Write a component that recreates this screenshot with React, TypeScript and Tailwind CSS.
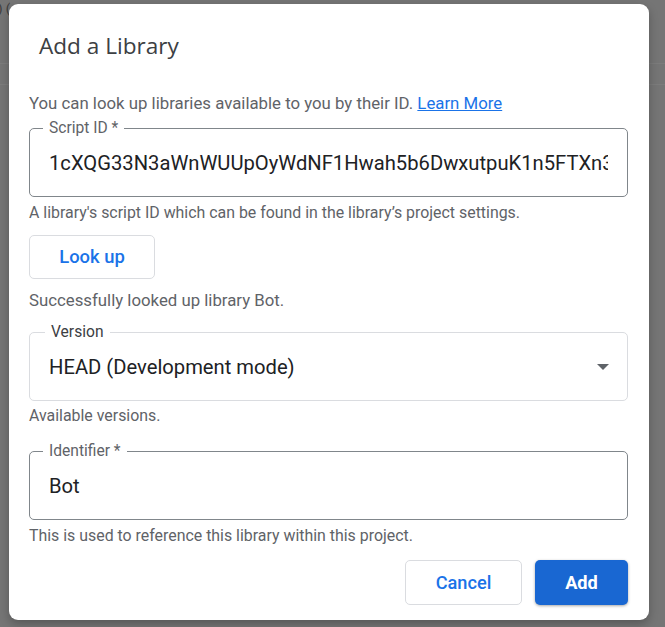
import React from 'react';

const font = { fontFamily: 'Roboto, "Noto Sans", Arial, sans-serif' };

interface FieldProps {
  label: string;
  value: string;
  muted?: boolean;
  select?: boolean;
}

const OutlinedField: React.FC<FieldProps> = ({ label, value, muted, select }) => (
  <div
    className={`relative h-[69px] rounded-[5px] border ${
      muted ? 'border-[#dadce0]' : 'border-[#80868b]'
    }`}
  >
    <span
      className={`absolute -top-[11px] bg-white px-[6px] text-[15.6px] leading-[20px] ${
        muted ? 'left-[15px] text-[#3c4043]' : 'left-[13px] text-[#5f6368]'
      }`}
    >
      {label}
    </span>
    <div className="flex h-full items-center pl-[19px] pr-[19px]">
      <span className="flex-1 overflow-hidden whitespace-nowrap text-[20.2px] leading-[26px] text-[#202124]">
        {value}
      </span>
      {select && (
        <svg width="12" height="6" viewBox="0 0 12 6" className="ml-3 mr-[-1px]">
          <path d="M0 0h12L6 6z" fill="#5f6368" />
        </svg>
      )}
    </div>
  </div>
);

const Helper: React.FC<{ children: React.ReactNode; className?: string }> = ({ children, className }) => (
  <p className={`leading-[20px] text-[#5f6368] ${className ?? ''}`}>{children}</p>
);

export default function App() {
  return (
    <div className="relative h-[627px] w-[665px] overflow-hidden bg-[#757575]" style={font}>
      {/* page underneath the scrim */}
      <div className="h-[64px] border-b border-[#7c7c7c] text-[13px] leading-[18px] text-[#3a3a3a]">
        <span className="-ml-[2px]">) (</span>
      </div>
      <div className="h-[21px] border-b border-[#7c7c7c]" />

      <div className="absolute left-[9px] top-[4px] flex h-[616px] w-[640px] flex-col rounded-[9px] bg-white pl-[20px] pr-[21px] shadow-[0_4px_10px_rgba(0,0,0,0.25)]">
        <h1
          className="ml-[10px] mt-[28px] text-[22.6px] leading-[28px] text-[#3c4043]"
          style={{ fontFamily: '"Open Sans", Roboto, sans-serif' }}
        >
          Add a Library
        </h1>

        <Helper className="mt-[33px] text-[16.8px]">
          You can look up libraries available to you by their ID.{' '}
          <a className="text-[#1a73e8] underline">Learn More</a>
        </Helper>

        <div className="mt-[15px]">
          <OutlinedField label="Script ID *" value="1cXQG33N3aWnWUUpOyWdNF1Hwah5b6DwxutpuK1n5FTXn3Qm8rLz" />
        </div>
        <Helper className="mt-[6px] text-[15.9px]">
          A library's script ID which can be found in the library’s project settings.
        </Helper>

        <button className="mt-[12px] h-[44px] w-[126px] rounded-[5px] border border-[#dadce0] text-[18.4px] font-medium text-[#1a73e8]">
          Look up
        </button>
        <Helper className="mt-[11px] text-[16.8px]">Successfully looked up library Bot.</Helper>

        <div className="mt-[22px]">
          <OutlinedField label="Version" value="HEAD (Development mode)" muted select />
        </div>
        <Helper className="mt-[5px] text-[15.9px]">Available versions.</Helper>

        <div className="mt-[25px]">
          <OutlinedField label="Identifier *" value="Bot" />
        </div>
        <Helper className="mt-[6px] text-[15.9px]">This is used to reference this library within this project.</Helper>

        <div className="mt-[14px] flex justify-end gap-[13px]">
          <button className="h-[45px] w-[117px] rounded-[5px] border border-[#dadce0] text-[18.2px] font-medium text-[#1a73e8]">
            Cancel
          </button>
          <button className="h-[45px] w-[93px] rounded-[5px] bg-[#1967d2] text-[18.2px] font-bold text-white shadow-[0_1px_3px_rgba(0,0,0,0.35)]">
            Add
          </button>
        </div>
      </div>
    </div>
  );
}
